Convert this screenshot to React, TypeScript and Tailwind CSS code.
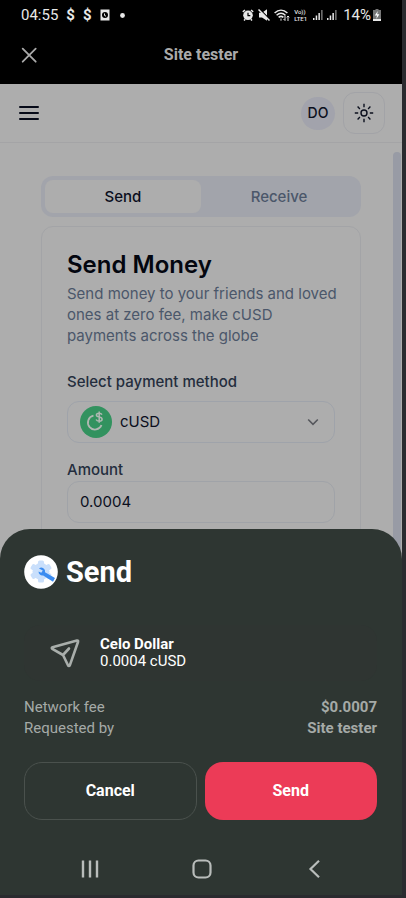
import React from "react";

const roboto = "font-['Roboto','Liberation_Sans',sans-serif]";
const inter = "font-['Inter','Liberation_Sans',sans-serif]";

function SignalBars() {
  return (
    <svg className="h-3 w-[10px]" viewBox="0 0 10 12" aria-hidden="true">
      <path d="M0 9h1.500v2H0zM2.700 6.500h1.500V11H2.700zM5.400 4h1.500v7H5.400z" fill="#e8e8e8" />
      <path d="M8.100 1h1.500v10H8.100z" fill="#777" />
    </svg>
  );
}

function StatusBar() {
  return (
    <div className="flex h-[30px] items-center justify-between px-[21px] text-[15px] leading-5 text-[#e8e8e8]">
      <div className="flex items-center gap-2">
        <span>04:55</span>
        <span className="font-bold">$</span>
        <span className="font-bold">$</span>
        <svg className="h-3 w-[10px]" viewBox="0 0 10 12" aria-hidden="true">
          <rect x="0.5" y="0.5" width="9" height="11" fill="#e8e8e8" />
          <circle cx="5" cy="6" r="3" fill="#000" />
          <path d="M4.500 4.500v2l1.500.7" stroke="#e8e8e8" strokeWidth="1" fill="none" />
        </svg>
        <svg className="h-[5px] w-[9px]" viewBox="0 0 9 5" aria-hidden="true">
          <circle cx="4.500" cy="2.500" r="2.400" fill="#e8e8e8" />
        </svg>
      </div>
      <div className="flex items-center gap-1">
        <svg className="h-3 w-3" viewBox="0 0 12 12" aria-hidden="true">
          <path d="M0.800 2.800 3 1M11.200 2.800 9 1M2 11.500l1.200-1.300M10 11.500 8.800 10.200" stroke="#e8e8e8" strokeWidth="1.500" />
          <circle cx="6" cy="6.300" r="4.800" fill="#e8e8e8" />
          <path d="M6 3.700v3h2.300" stroke="#000" strokeWidth="1.200" fill="none" />
        </svg>
        <svg className="h-3 w-3" viewBox="0 0 12 12" aria-hidden="true">
          <path d="M1 3.800h3L9 0.300v11.400L4 8.500H1z" fill="#e8e8e8" />
          <path d="M1.500 0 12 10.500" stroke="#000" strokeWidth="1.300" />
          <path d="m0.500 0.500 11 11" stroke="#e8e8e8" strokeWidth="1.500" />
        </svg>
        <svg className="h-3 w-4" viewBox="0 0 16 12" fill="none" stroke="#e8e8e8" aria-hidden="true">
          <path d="M0.600 4C4.500 0.200 9.500 0.200 13.400 4M2.600 6.300c2.800-2.600 6-2.600 8.800 0M4.600 8.400c1.600-1.400 3.200-1.400 4.800 0" strokeWidth="1.500" />
          <path d="M7 9.500v2.200M11 6.500v5M9.500 10 11 11.500M14 12V7M12.700 8.300 14 7l1.300 1.300" strokeWidth="1" />
        </svg>
        <div className="flex w-[15px] flex-col text-[6px] leading-[7px] font-medium">
          <span className="whitespace-nowrap">Vo))</span>
          <span className="whitespace-nowrap">LTE1</span>
        </div>
        <SignalBars />
        <SignalBars />
        <div className="ml-0.5 flex items-center gap-0.5">
          <span>14%</span>
          <svg className="h-3 w-2" viewBox="0 0 8 12" aria-hidden="true">
            <path d="M2.500 0h3v1H8v9H0V1h2.500z" fill="#777" />
            <path d="M0 10h8v2H0z" fill="#e8e8e8" />
            <path d="M4.800 2 1.800 6.500H4L3.300 10 6.400 5.300H4.200z" fill="#fff" />
          </svg>
        </div>
      </div>
    </div>
  );
}

function TitleBar() {
  return (
    <div className="mb-1 grid h-[50px] grid-cols-[1fr_auto_1fr] items-center px-5">
      <button type="button" aria-label="Close" className="flex h-8 w-8 items-center">
        <svg className="h-[18px] w-[18px]" viewBox="0 0 18 18" fill="none" stroke="#aaa" strokeWidth="1.800" strokeLinecap="round">
          <path d="m2.700 2.700 13 13M15.700 2.700l-13 13" />
        </svg>
      </button>
      <h1 className="text-base leading-5 font-bold text-[#aaa]">Site tester</h1>
    </div>
  );
}

function AppHeader() {
  return (
    <header className="flex items-center justify-between border-b border-[#a4a4a6] px-[17px] py-2">
      <button type="button" aria-label="Open menu" className="flex h-6 w-6 items-center justify-center">
        <svg className="h-[18px] w-5" viewBox="0 0 20 18" stroke="#060a18" strokeWidth="2" strokeLinecap="round">
          <path d="M1 3h18M1 9h18M1 15h18" />
        </svg>
      </button>
      <div className="flex items-center gap-2">
        <span className="flex h-[33px] w-[34px] items-center justify-center rounded-full bg-[#a2a3ac] text-sm leading-5 font-medium text-[#0b0f1d]">
          DO
        </span>
        <button
          type="button"
          aria-label="Toggle theme"
          className="flex h-[42px] w-[42px] items-center justify-center rounded-xl border border-[#a2a3a7]"
        >
          <svg className="h-5 w-5" viewBox="0 0 20 20" fill="none" stroke="#0b0f1d" strokeWidth="1.400">
            <circle cx="10" cy="10" r="3" />
            <path d="M10 0.800v3.400M10 15.800v3.400M0.800 10h3.400M15.800 10h3.400M3.600 3.600l2.300 2.300M14.100 14.100l2.300 2.300M3.600 16.400l2.300-2.300M14.100 5.900l2.300-2.300" />
          </svg>
        </button>
      </div>
    </header>
  );
}

function SendCard() {
  return (
    <section className="mt-[9px] h-[440px] rounded-xl border border-[#a3a4a7] px-[25px] pt-5">
      <h2 className="text-2xl leading-9 font-semibold text-[#03060f]">Send Money</h2>
      <p className="-mr-1 text-[15px] leading-[21px] text-[#4b576a]">
        Send money to your friends and loved ones at zero fee, make cUSD payments across the globe
      </p>
      <div className="mt-[26px] flex flex-col">
        <label htmlFor="method" className="text-[15px] leading-5 font-medium text-[#242d3d]">
          Select payment method
        </label>
        <div className="mt-[9px] flex h-[42px] items-center gap-2 rounded-xl border border-[#9fa3aa] px-3">
          <svg className="h-8 w-8 shrink-0" viewBox="0 0 32 32" fill="none" aria-hidden="true">
            <circle cx="16" cy="16" r="16" fill="#32925f" />
            <path d="M13.500 9.700a7 7 0 1 0 8 9.300" stroke="#b0b8b3" strokeWidth="1.800" />
            <path d="M22 8.600c-.6-1-1.700-1.400-2.900-1.400-1.500 0-2.700.7-2.700 1.900 0 2.700 5.700 1.300 5.700 4.100 0 1.300-1.300 2-2.900 2-1.400 0-2.600-.6-3.100-1.700M19.200 5.500v11.300" stroke="#b0b8b3" strokeWidth="1.500" />
          </svg>
          <select id="method" className="min-w-0 flex-1 appearance-none bg-transparent text-[15px] leading-5 text-[#0b0f1d]">
            <option>cUSD</option>
          </select>
          <svg className="mr-[3px] h-3 w-3 shrink-0" viewBox="0 0 12 12" fill="none" stroke="#55575c" strokeWidth="1.600" aria-hidden="true">
            <path d="m1.200 3.500 4.800 4.800 4.800-4.800" />
          </svg>
        </div>
        <label htmlFor="amount" className="mt-[17px] text-[15px] leading-5 font-medium text-[#242d3d]">
          Amount
        </label>
        <input
          id="amount"
          defaultValue="0.0004"
          className="mt-px h-[42px] w-full rounded-xl border border-[#a0a3a8] bg-transparent px-3 pb-0.5 text-[15px] leading-5 text-[#0b0f1d]"
        />
      </div>
    </section>
  );
}

function SendSheet() {
  return (
    <div role="dialog" aria-labelledby="sheet-title" className="absolute inset-x-0 bottom-0 rounded-t-[30px] bg-[#2e3632] pt-[25px] pr-[25px] pl-6 text-white">
      <div className="flex items-center gap-2">
        <svg className="h-[34px] w-[34px]" viewBox="0 0 34 34" aria-hidden="true">
          <circle cx="17" cy="17" r="16.800" fill="#fff" />
          <g fill="#c9dffb">
            <circle cx="17" cy="16.500" r="8.500" />
            <rect x="14" y="5.500" width="6" height="22" rx="1.500" />
            <rect x="14" y="5.500" width="6" height="22" rx="1.500" transform="rotate(60 17 16.500)" />
            <rect x="14" y="5.500" width="6" height="22" rx="1.500" transform="rotate(120 17 16.500)" />
          </g>
          <path d="M15 13.500a3.700 3.700 0 0 1 6 3.700l10 5.900-2 3.600-9.800-6.300a3.700 3.700 0 0 1-4.600-4l2.700 1.300 1.500-2.200z" fill="#3b8cf0" />
        </svg>
        <h2 id="sheet-title" className="text-[29px] leading-9 font-bold">Send</h2>
      </div>
      <div className="mt-[35px] flex h-14 items-center gap-5 rounded-2xl bg-[#2f3532] pl-[26px]">
        <svg className="h-[30px] w-[30px]" viewBox="0 0 30 30" fill="none" stroke="#a9aeab" strokeWidth="2.600" strokeLinecap="round" strokeLinejoin="round" aria-hidden="true">
          <path d="M27 2.500 2.500 9.200c-.9.300-1 1.200-.2 1.700L13 17l5 10.300c.5.900 1.600.8 1.900-.2L28 4c.3-1-.1-1.700-1-1.500ZM13 17l6-6.500" />
        </svg>
        <div className="text-[15px] leading-[17px]">
          <div className="font-bold">Celo Dollar</div>
          <div>0.0004 cUSD</div>
        </div>
      </div>
      <dl className="mt-4 text-[15px] leading-[21px] text-[#a5aaa7]">
        <div className="flex justify-between">
          <dt>Network fee</dt>
          <dd className="font-bold">$0.0007</dd>
        </div>
        <div className="flex justify-between">
          <dt>Requested by</dt>
          <dd className="font-bold">Site tester</dd>
        </div>
      </dl>
      <div className="mt-[23px] grid grid-cols-2 gap-2 text-base leading-5 font-bold">
        <button type="button" className="h-[58px] rounded-[18px] border border-[#4a514d]">
          Cancel
        </button>
        <button type="button" className="h-[58px] rounded-[18px] bg-[#ec3b57]">
          Send
        </button>
      </div>
      <nav aria-label="System" className="mt-[37px] mb-[14px] flex items-center justify-between pr-[53px] pl-14">
        <button type="button" aria-label="Recent apps">
          <svg className="h-6 w-5" viewBox="0 0 20 24" stroke="#b9bdbb" strokeWidth="2.400">
            <path d="M3 3.500v17M10 3.500v17M17 3.500v17" />
          </svg>
        </button>
        <button type="button" aria-label="Home">
          <svg className="h-6 w-6" viewBox="0 0 24 24" fill="none" stroke="#b9bdbb" strokeWidth="2.200">
            <rect x="3.500" y="3.500" width="17" height="17" rx="5" />
          </svg>
        </button>
        <button type="button" aria-label="Back">
          <svg className="h-6 w-5" viewBox="0 0 20 24" fill="none" stroke="#b9bdbb" strokeWidth="2.200">
            <path d="M15 3.800 6.500 12l8.500 8.200" />
          </svg>
        </button>
      </nav>
    </div>
  );
}

export default function App() {
  return (
    <div className={`flex h-screen bg-[#2a2b2f] pr-1 pb-[3px] ${roboto}`}>
      <div className="relative flex min-w-0 flex-1 flex-col overflow-hidden">
        <div className="shrink-0 bg-black">
          <StatusBar />
          <TitleBar />
        </div>
        <div className={`flex min-h-0 flex-1 flex-col overflow-hidden bg-[#adadad] ${inter}`}>
          <AppHeader />
          <div className="flex min-h-0 flex-1">
            <main className="min-w-0 flex-1 pt-[33px] pr-8 pl-[41px]">
              <div role="tablist" className="grid grid-cols-2 rounded-xl bg-[#a2a4ab] p-1 text-[15px] leading-5 font-medium">
                <button type="button" role="tab" aria-selected="true" className="h-[33px] rounded-lg bg-[#adadad] text-[#0b0f1d]">
                  Send
                </button>
                <button type="button" role="tab" aria-selected="false" className="h-[33px] rounded-lg text-[#4b576a]">
                  Receive
                </button>
              </div>
              <SendCard />
            </main>
            <div className="mt-[9px] mr-px w-2 rounded-t-full bg-[#989ba5]" />
          </div>
        </div>
        <SendSheet />
      </div>
    </div>
  );
}
